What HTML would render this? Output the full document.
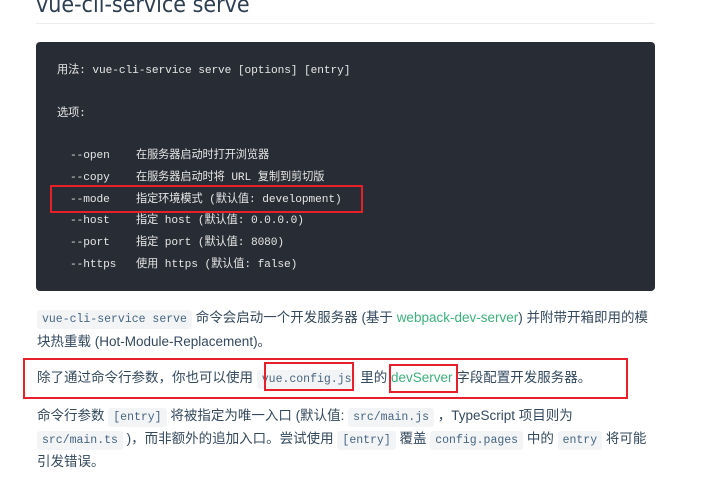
<!DOCTYPE html>
<html><head><meta charset="utf-8"><style>
*{margin:0;padding:0;box-sizing:border-box}
body{width:709px;height:500px;background:#fff;position:relative;overflow:hidden;font-family:"Liberation Sans","Noto Sans CJK SC",sans-serif;color:#2c3e50}
.a{position:absolute;white-space:nowrap}
h1{position:absolute;left:36px;top:-8px;font-size:23px;font-weight:normal;color:#2c3e50;font-family:"DejaVu Sans Condensed","Liberation Sans",sans-serif}
.hr{position:absolute;left:36px;top:23px;width:619px;height:1px;background:#eaecef}
.pre{position:absolute;left:36px;top:42px;width:619px;height:249px;background:#282c34;border-radius:4px}
.m{font-family:"Liberation Mono","Noto Sans CJK SC",monospace;font-size:11.2px;color:#e6e6e6;line-height:16px;letter-spacing:-0.1px}
.p{font-size:13.5px;color:#34495e;line-height:20px}
code{font-family:"Liberation Mono",monospace;font-size:11.5px;background:#f3f4f5;color:#476582;padding:3px 5px;border-radius:3px}
.g{color:#3eaf7c}
.rb{position:absolute;border:2px solid #e8202a}
</style></head><body>
<h1>vue-cli-service serve</h1>
<div class="hr"></div>
<div class="pre"></div>
<div class="a m" style="left:57px;top:63px">用法: vue-cli-service serve [options] [entry]</div>
<div class="a m" style="left:57px;top:106px">选项:</div>
<div class="a m" style="left:70px;top:148px">--open</div><div class="a m" style="left:136px;top:148px">在服务器启动时打开浏览器</div>
<div class="a m" style="left:70px;top:170px">--copy</div><div class="a m" style="left:136px;top:170px">在服务器启动时将 URL 复制到剪切版</div>
<div class="a m" style="left:70px;top:192px">--mode</div><div class="a m" style="left:136px;top:192px">指定环境模式 (默认值: development)</div>
<div class="a m" style="left:70px;top:213px">--host</div><div class="a m" style="left:136px;top:213px">指定 host (默认值: 0.0.0.0)</div>
<div class="a m" style="left:70px;top:235px">--port</div><div class="a m" style="left:136px;top:235px">指定 port (默认值: 8080)</div>
<div class="a m" style="left:70px;top:257px">--https</div><div class="a m" style="left:136px;top:257px">使用 https (默认值: false)</div>
<div class="rb" style="left:50px;top:185px;width:313px;height:28px"></div>

<div class="a p" style="left:37px;top:308px"><code>vue-cli-service serve</code> 命令会启动一个开发服务器 (基于 <span class="g">webpack-dev-server</span>) 并附带开箱即用的模</div>
<div class="a p" style="left:37px;top:332px">块热重载 (Hot-Module-Replacement)。</div>
<div class="rb" style="left:23px;top:358px;width:605px;height:41px"></div>
<div class="a p" style="left:37px;top:368px">除了通过命令行参数，你也可以使用 <code>vue.config.js</code> 里的 <span class="g">devServer</span> 字段配置开发服务器。</div>
<div class="rb" style="left:264px;top:362px;width:90px;height:29px"></div>
<div class="rb" style="left:389px;top:364px;width:69px;height:29px"></div>
<div class="a p" style="left:37px;top:406px">命令行参数 <code>[entry]</code> 将被指定为唯一入口 (默认值: <code>src/main.js</code> ，TypeScript 项目则为</div>
<div class="a p" style="left:37px;top:429px"><code>src/main.ts</code> )，而非额外的追加入口。尝试使用 <code>[entry]</code> 覆盖 <code>config.pages</code> 中的 <code>entry</code> 将可能</div>
<div class="a p" style="left:37px;top:452px">引发错误。</div>
</body></html>
